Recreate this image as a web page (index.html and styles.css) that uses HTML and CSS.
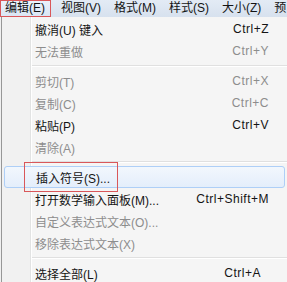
FILE: index.html
```html
<!DOCTYPE html>
<html lang="zh-CN">
<head>
<meta charset="utf-8">
<link rel="stylesheet" href="styles.css">
</head>
<body>
<div class="menubar">
  <div class="mb-item active">编辑(E)</div>
  <div class="mb-item">视图(V)</div>
  <div class="mb-item">格式(M)</div>
  <div class="mb-item">样式(S)</div>
  <div class="mb-item">大小(Z)</div>
  <div class="mb-item">预</div>
</div>
<div class="dropdown">
  <div class="row"><span class="label">撤消(U) 键入</span><span class="key">Ctrl+Z</span></div>
  <div class="row disabled"><span class="label">无法重做</span><span class="key">Ctrl+Y</span></div>
  <div class="sep"></div>
  <div class="row disabled"><span class="label">剪切(T)</span><span class="key">Ctrl+X</span></div>
  <div class="row disabled"><span class="label">复制(C)</span><span class="key">Ctrl+C</span></div>
  <div class="row"><span class="label">粘贴(P)</span><span class="key">Ctrl+V</span></div>
  <div class="row disabled"><span class="label">清除(A)</span><span class="key"></span></div>
  <div class="sep"></div>
  <div class="row hover"><span class="label">插入符号(S)...</span><span class="key"></span><span class="mark"></span></div>
  <div class="row"><span class="label">打开数学输入面板(M)...</span><span class="key">Ctrl+Shift+M</span></div>
  <div class="row disabled"><span class="label">自定义表达式文本(O)...</span><span class="key"></span></div>
  <div class="row disabled"><span class="label">移除表达式文本(X)</span><span class="key"></span></div>
  <div class="sep"></div>
  <div class="row"><span class="label">选择全部(L)</span><span class="key key-a">Ctrl+A</span></div>
</div>
</body>
</html>
```
FILE: styles.css
```css
html, body {
  margin: 0;
  padding: 0;
}
body {
  width: 287px;
  height: 282px;
  overflow: hidden;
  background: #f0f0f0;
  font-family: "Liberation Sans", "Noto Sans CJK SC", sans-serif;
  font-size: 12px;
  color: #141414;
}
.menubar {
  display: flex;
  height: 17px;
  background: linear-gradient(#e3ebf5, #d7e1ee);
  align-items: center;
  overflow: hidden;
}
.mb-item {
  padding: 0 7px 0 6px;
  line-height: 17px;
  white-space: nowrap;
}
.mb-item.active {
  box-sizing: border-box;
  height: 17px;
  margin-right: 4px;
  border: 1px solid #d9575a;
  padding: 0 5px 0 4px;
  line-height: 15px;
  background: linear-gradient(#eaf2fb, #dbe6f4);
}
.dropdown {
  box-sizing: border-box;
  height: 265px;
  margin-left: 1px;
  border-left: 1px solid #979797;
  background: linear-gradient(to right, #f1f1f1 0, #f1f1f1 28px, #e2e3e3 28px, #e2e3e3 29px, #ffffff 29px, #ffffff 30px, #f5f5f5 30px);
  padding-top: 1px;
}
.row {
  position: relative;
  display: grid;
  grid-template-columns: 1fr auto;
  height: 22px;
  align-items: center;
  padding: 0 18px 0 33px;
  white-space: nowrap;
}
.key {
  letter-spacing: 0.5px;
}
.row.disabled {
  color: #8d8d8d;
}
.row.hover {
  margin: 0 2px 0 2px;
  padding-left: 31px;
  padding-right: 16px;
  border: 1px solid #aecff7;
  border-radius: 3px;
  height: 20px;
  background: linear-gradient(#f2f7fd, #e4eefb);
}
.mark {
  position: absolute;
  left: 19px;
  top: -5px;
  width: 92px;
  height: 28px;
  border: 1px solid #d9575a;
}
.key-a {
  padding-right: 8px;
}
.sep {
  height: 8px;
  margin-left: 30px;
  position: relative;
}
.sep::after {
  content: "";
  position: absolute;
  left: 0;
  right: 0;
  top: 3px;
  height: 1px;
  background: #e0e0e0;
  border-bottom: 1px solid #ffffff;
}
```
